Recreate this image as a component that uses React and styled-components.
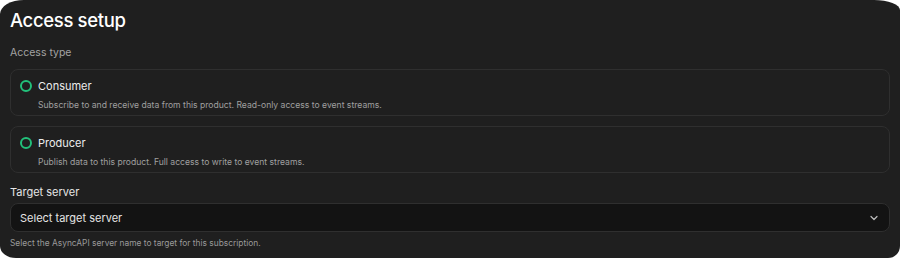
import React, { useState } from 'react';
import styled, { createGlobalStyle } from 'styled-components';

const GlobalStyle = createGlobalStyle`
	html, body {
		margin: 0;
		padding: 0;
		background: #ffffff;
	}
	body {
		font-family: Inter, 'Liberation Sans', sans-serif;
		-webkit-font-smoothing: antialiased;
	}
`;

const Panel = styled.section`
	box-sizing: border-box;
	width: 900px;
	height: 258px;
	background: #1f1f1f;
	border-radius: 24px 26px 12px 16px / 14px 10px 12px 12px;
	padding: 8px 10px 0 10px;
	display: flex;
	flex-direction: column;
	color: #f2f2f2;
	overflow: hidden;
`;

const Title = styled.h2`
	margin: 0;
	font-size: 18.5px;
	line-height: 24px;
	font-weight: 500;
	letter-spacing: -0.35px;
	color: #ffffff;
`;

const SectionLabel = styled.div`
	margin-top: ${p => p.$top || 0}px;
	font-size: ${p => (p.$muted ? '10.5px' : '11px')};
	line-height: 14px;
	color: ${p => (p.$muted ? '#a3a3a3' : '#e6e6e6')};
`;

const Options = styled.div`
	margin-top: 9px;
	display: flex;
	flex-direction: column;
	gap: 10px;
`;

const OptionCard = styled.label`
	box-sizing: border-box;
	height: 47px;
	border: 1px solid #2f2f2f;
	border-radius: 8px;
	padding: 9px 9px 0 9px;
	display: grid;
	grid-template-columns: 12px 1fr;
	column-gap: 6px;
	row-gap: 2px;
	cursor: pointer;
`;

const Radio = styled.span`
	box-sizing: border-box;
	width: 12px;
	height: 12px;
	margin-top: 1px;
	border-radius: 50%;
	border: 2px solid #22c07a;
	display: flex;
	align-items: center;
	justify-content: center;

	&::after {
		content: '';
		width: 5px;
		height: 5px;
		border-radius: 50%;
		background: ${p => (p.$checked ? '#22c07a' : 'transparent')};
	}
`;

const OptionName = styled.span`
	font-size: 11px;
	line-height: 14px;
	font-weight: 400;
	color: #ececec;
`;

const OptionDesc = styled.span`
	grid-column: 2;
	font-size: 8.6px;
	line-height: 14px;
	color: #a0a0a0;
`;

const Select = styled.button`
	box-sizing: border-box;
	margin-top: 4px;
	width: 100%;
	height: 29px;
	background: #131313;
	border: 1px solid #2f2f2f;
	border-radius: 8px;
	padding: 0 9px 0 9px;
	display: flex;
	align-items: center;
	justify-content: space-between;
	font-family: inherit;
	font-size: 11px;
	color: #e4e4e4;
	cursor: pointer;
`;

const Helper = styled.div`
	margin-top: 5px;
	font-size: 8.4px;
	line-height: 12px;
	color: #9a9a9a;
`;

const Chevron = () => (
	<svg width="12" height="12" viewBox="0 0 24 24" fill="none" stroke="#bdbdbd" strokeWidth="2.4" strokeLinecap="round" strokeLinejoin="round">
		<path d="M6 9l6 6 6-6" />
	</svg>
);

const accessTypes = [
	{ id: 'consumer', name: 'Consumer', desc: 'Subscribe to and receive data from this product. Read-only access to event streams.' },
	{ id: 'producer', name: 'Producer', desc: 'Publish data to this product. Full access to write to event streams.' }
];

const App = () => {
	const [selected, setSelected] = useState(null);

	return (
		<>
			<GlobalStyle />
			<Panel>
				<Title>Access setup</Title>
				<SectionLabel $muted $top={14}>Access type</SectionLabel>
				<Options>
					{accessTypes.map(type => (
						<OptionCard key={type.id} onClick={() => setSelected(type.id)}>
							<Radio $checked={selected === type.id} />
							<OptionName>{type.name}</OptionName>
							<OptionDesc>{type.desc}</OptionDesc>
						</OptionCard>
					))}
				</Options>
				<SectionLabel $top={12}>Target server</SectionLabel>
				<Select type="button">
					<span>Select target server</span>
					<Chevron />
				</Select>
				<Helper>Select the AsyncAPI server name to target for this subscription.</Helper>
			</Panel>
		</>
	);
};

export default App;
